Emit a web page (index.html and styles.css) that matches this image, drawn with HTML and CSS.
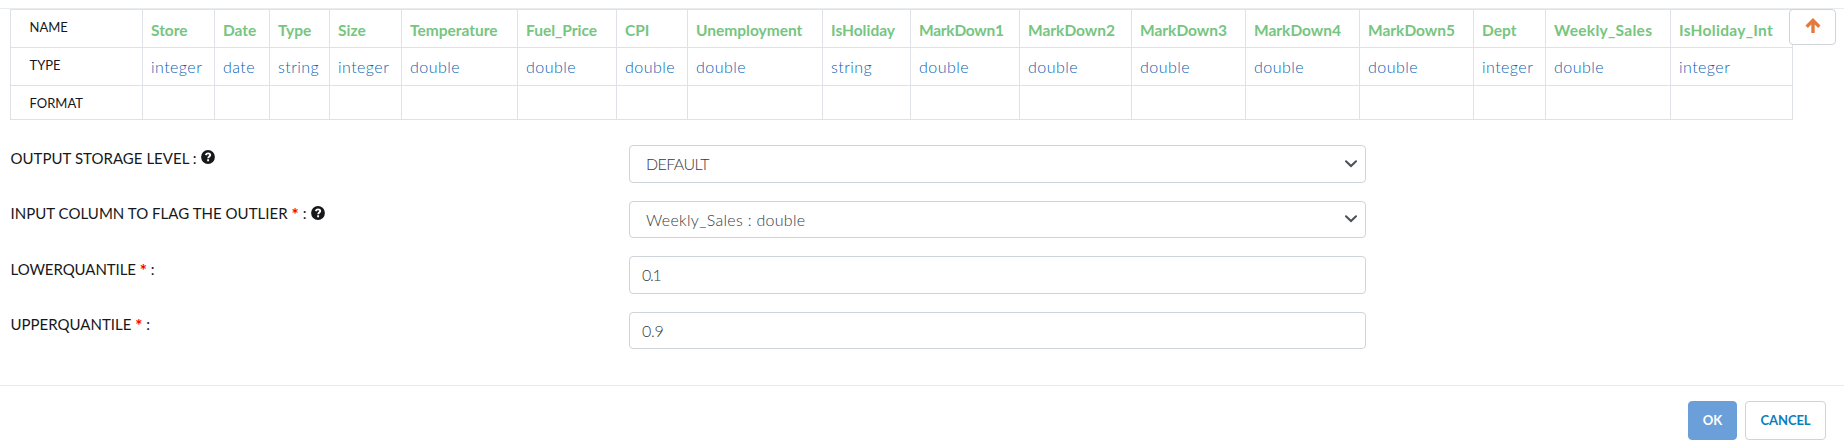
FILE: index.html
```html
<!DOCTYPE html>
<html lang="en">
<head>
<meta charset="utf-8">
<title>Outlier settings</title>
<link rel="stylesheet" href="styles.css">
</head>
<body>
<main class="panel">
  <button class="up-btn" aria-label="Move up"><svg width="16" height="16" viewBox="0 0 16 16"><path d="M8 15V3M1.7 8.7 8 2.4l6.3 6.3" fill="none" stroke="#e37b40" stroke-width="3.4"/></svg></button>
  <table class="schema">
    <colgroup><col class="c-head"><col class="c-72"><col class="c-55"><col class="c-60"><col class="c-72"><col class="c-116"><col class="c-99"><col class="c-71"><col class="c-135"><col class="c-88"><col class="c-109"><col class="c-112"><col class="c-114"><col class="c-114"><col class="c-114"><col class="c-72"><col class="c-125"><col class="c-122"></colgroup>
    <tr class="names"><th>NAME</th><td>Store</td><td>Date</td><td>Type</td><td>Size</td><td>Temperature</td><td>Fuel_Price</td><td>CPI</td><td>Unemployment</td><td>IsHoliday</td><td class="tight">MarkDown1</td><td>MarkDown2</td><td>MarkDown3</td><td>MarkDown4</td><td>MarkDown5</td><td>Dept</td><td class="wide">Weekly_Sales</td><td class="wide">IsHoliday_Int</td></tr>
    <tr class="types"><th>TYPE</th><td>integer</td><td>date</td><td>string</td><td>integer</td><td>double</td><td>double</td><td>double</td><td>double</td><td>string</td><td>double</td><td>double</td><td>double</td><td>double</td><td>double</td><td>integer</td><td>double</td><td>integer</td></tr>
    <tr class="formats"><th>FORMAT</th><td></td><td></td><td></td><td></td><td></td><td></td><td></td><td></td><td></td><td></td><td></td><td></td><td></td><td></td><td></td><td></td><td></td></tr>
  </table>
  <form class="form">
    <div class="row"><label class="label"><span class="t1">OUTPUT STORAGE LEVEL :</span><svg class="help" width="14" height="14" viewBox="0 0 14 14"><circle cx="7" cy="7" r="6.9" fill="#16181b"/><path d="M4.7 5.1C5.2 3.9 6 3.4 7.1 3.4c1.3 0 2.1.7 2.1 1.7 0 1.5-2 1.5-2 3.1M7.1 9.3v2" fill="none" stroke="#fff" stroke-width="1.9"/></svg></label>
      <div class="field select"><span class="v1">DEFAULT</span><svg width="12" height="8" viewBox="0 0 12 8"><path d="M1 1.2 6 6l5-4.8" fill="none" stroke="#495057" stroke-width="2" stroke-linecap="round"/></svg></div></div>
    <div class="row"><label class="label"><span class="t2">INPUT COLUMN TO FLAG THE OUTLIER <b class="req">*</b> :</span><svg class="help" width="14" height="14" viewBox="0 0 14 14"><circle cx="7" cy="7" r="6.9" fill="#16181b"/><path d="M4.7 5.1C5.2 3.9 6 3.4 7.1 3.4c1.3 0 2.1.7 2.1 1.7 0 1.5-2 1.5-2 3.1M7.1 9.3v2" fill="none" stroke="#fff" stroke-width="1.9"/></svg></label>
      <div class="field select"><span class="v2">Weekly_Sales : double</span><svg width="12" height="8" viewBox="0 0 12 8"><path d="M1 1.2 6 6l5-4.8" fill="none" stroke="#495057" stroke-width="2" stroke-linecap="round"/></svg></div></div>
    <div class="row"><label class="label"><span class="t3">LOWERQUANTILE <b class="req">*</b> :</span></label><div class="field"><span class="v3">0.1</span></div></div>
    <div class="row"><label class="label"><span class="t4">UPPERQUANTILE <b class="req">*</b> :</span></label><div class="field"><span class="v4">0.9</span></div></div>
  </form>
</main>
<footer class="footer"><button class="btn ok">OK</button><button class="btn cancel">CANCEL</button></footer>
</body>
</html>
```
FILE: styles.css
```css
* { box-sizing: border-box; }
body { margin: 0; height: 446px; overflow: hidden; background: #fff; color: #16181b; font-family: Lato, "Open Sans", sans-serif; padding-top: 8px; display: flex; flex-direction: column; }
.panel { position: relative; height: 377px; border-top: 1px solid #e9ecef; padding-left: 10px; }
.schema { border-collapse: collapse; table-layout: fixed; width: 1783px; }
.schema th, .schema td { border: 1px solid #dee2e6; vertical-align: top; text-align: left; white-space: nowrap; line-height: 20px; padding: 10px 0 0 8px; }
.schema th { font-weight: 400; font-size: 13px; padding: 7px 0 0 18.5px; }
.names, .types { height: 38px; }
.formats { height: 34px; }
.names td { color: #76c580; font-weight: 700; font-size: 15.5px; }
.names .tight { letter-spacing: -.25px; }
.names .wide { letter-spacing: .3px; }
.schema .types td { color: #0a5fb0; font-weight: 300; font-size: 16px; letter-spacing: .45px; padding-top: 9px; }
.c-head { width: 132px; }
.c-55 { width: 55px; }
.c-60 { width: 60px; }
.c-71 { width: 71px; }
.c-72 { width: 72px; }
.c-88 { width: 88px; }
.c-99 { width: 99px; }
.c-109 { width: 109px; }
.c-112 { width: 112px; }
.c-114 { width: 114px; }
.c-116 { width: 116px; }
.c-122 { width: 122px; }
.c-125 { width: 125px; }
.c-135 { width: 135px; }
.up-btn { position: absolute; left: 1789px; top: 0; width: 47px; height: 36px; background: #fff; border: 1px solid #ced4da; border-radius: 4px; padding: 0 0 2px; display: flex; align-items: center; justify-content: center; }
.form { padding-top: 25px; display: grid; gap: 18px; }
.row { display: grid; grid-template-columns: 619px 737px; height: 37.6px; }
.label { display: flex; align-items: center; gap: 4.5px; height: 25px; font-size: 15px; white-space: pre; padding-left: .5px; }
.help { margin-bottom: 1px; }
.t1, .t2 { letter-spacing: .03px; }
.t3 { letter-spacing: -.07px; }
.req { color: #f00; font-size: 17px; line-height: 15px; vertical-align: -2px; }
.field { border: 1px solid #ced4da; border-radius: 4px; display: flex; align-items: center; justify-content: space-between; padding: 0 8px 0 12px; font-size: 16px; font-weight: 300; color: #343b42; }
.select { padding-left: 16px; }
.v1 { letter-spacing: -.6px; }
.v2 { letter-spacing: .3px; }
.v3 { letter-spacing: -1.2px; }
.v4 { letter-spacing: -.3px; }
.footer { border-top: 1px solid #e9e9e9; display: flex; justify-content: flex-end; gap: 8px; padding: 15px 18px 0 0; }
.btn { height: 39px; border-radius: 4px; border: 1px solid #ced4da; background: #fff; font: 700 13px Lato, sans-serif; padding: 0 0 1px; }
.ok { width: 49px; background: #6a9fd9; border-color: #6a9fd9; color: #fff; }
.cancel { width: 81px; color: #0b7dbd; letter-spacing: -.1px; }
```
